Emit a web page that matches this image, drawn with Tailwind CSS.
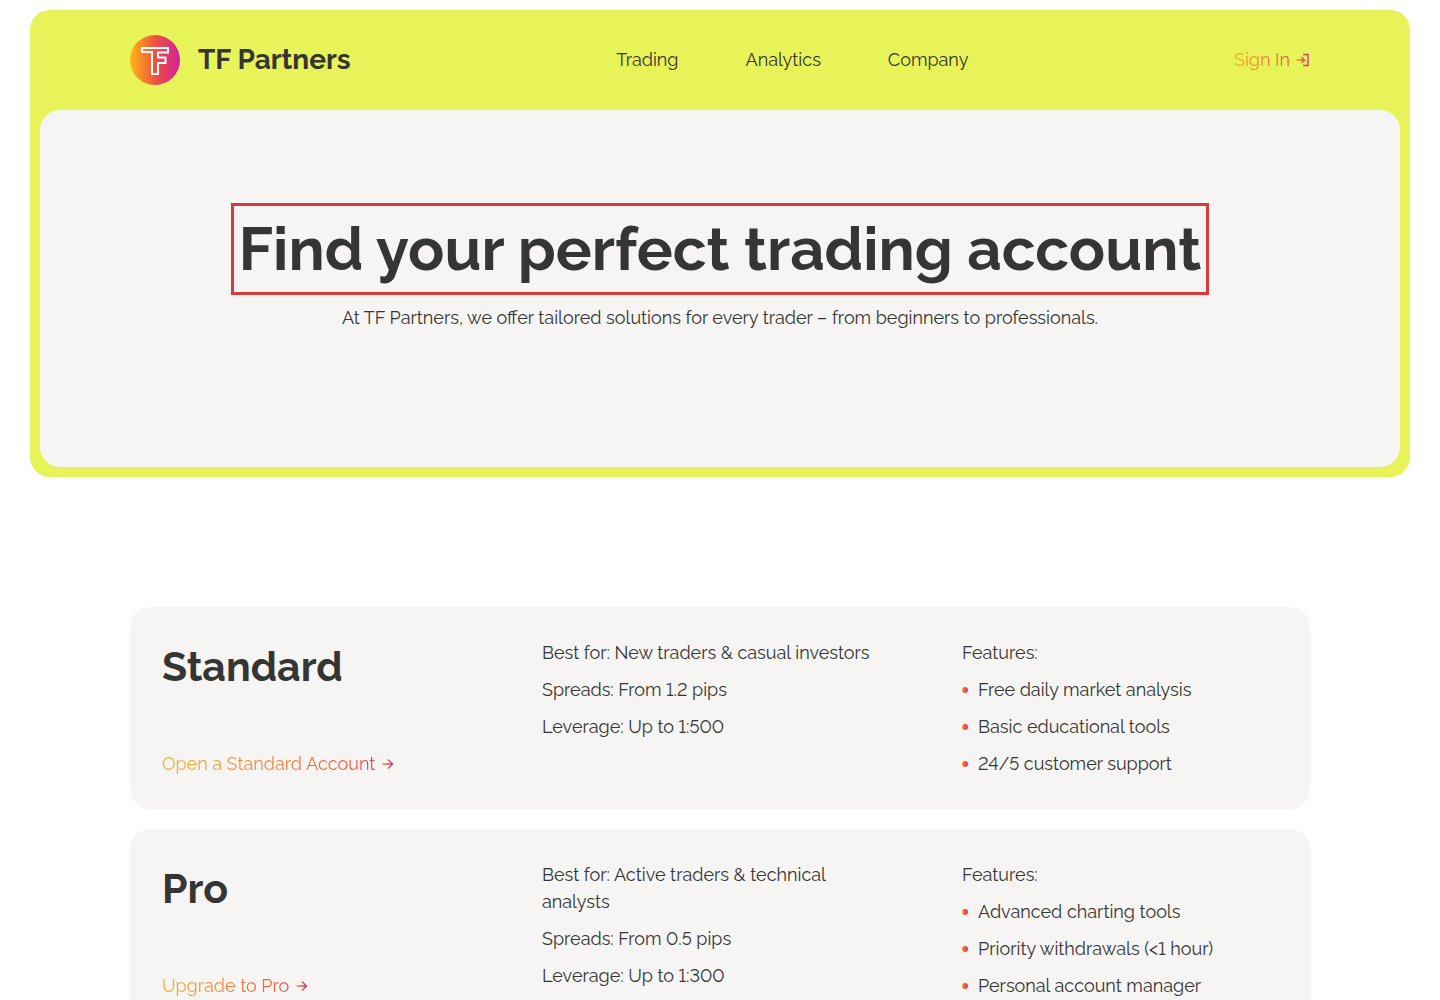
<!DOCTYPE html>
<html lang="en">

<head>
    <meta charset="UTF-8">
    <meta name="viewport" content="width=device-width, initial-scale=1.0">
    <script src="https://cdn.jsdelivr.net/npm/@tailwindcss/browser@4"></script>
    <title>TF Partners - Trading accounts</title>
</head>

<body class="bg-white font-['Raleway','Lato',sans-serif] text-lg leading-[27px] lining-nums text-[#353533]">
    <!-- shared gradient for icons -->
    <svg class="absolute size-0" aria-hidden="true">
        <defs>
            <linearGradient id="brand" gradientUnits="userSpaceOnUse" x1="0" x2="14" y1="0" y2="0">
                <stop offset="0" stop-color="#fba815" />
                <stop offset="0.5" stop-color="#ee4f45" />
                <stop offset="1" stop-color="#c81fa5" />
            </linearGradient>
        </defs>
    </svg>

    <div class="mx-[30px] mt-2.5 rounded-[20px] bg-[#e7f358] px-2.5 pb-2.5">
        <header class="flex h-[100px] items-center justify-between px-[90px] leading-7">
            <a href="#" class="flex items-center gap-[18px] text-[28px] leading-[30px] font-bold">
                <svg class="size-[50px]" viewBox="0 0 50 50" fill="none">
                    <defs>
                        <linearGradient id="logo" x1="0" x2="1" y1="0" y2="0">
                            <stop offset="0" stop-color="#fdb913" />
                            <stop offset="0.5" stop-color="#f0513f" />
                            <stop offset="1" stop-color="#d1219a" />
                        </linearGradient>
                    </defs>
                    <circle cx="25" cy="25" r="25" fill="url(#logo)" />
                    <path d="M12 13H38V17.500H28V22.500H35.500V28H28V39H22V17H12Z" stroke="#fff" stroke-width="2" />
                </svg>
                TF Partners
            </a>
            <nav class="flex gap-[67px]">
                <a href="#">Trading</a>
                <a href="#">Analytics</a>
                <a href="#">Company</a>
            </nav>
            <a href="#" class="flex items-center gap-1.5 bg-linear-to-r from-[#f9a41c] via-[#ee5a3c] via-70% to-[#d92f7c] bg-clip-text text-transparent">
                Sign In
                <svg class="size-3.5" viewBox="0 0 14 14" fill="none" stroke="url(#brand)" stroke-width="1.300">
                    <path d="M0.500 7H8.500L5.500 4M8.500 7L5.500 10" />
                    <path d="M7 1.500H12V12.500H7" />
                </svg>
            </a>
        </header>

        <section class="flex flex-col items-center rounded-[20px] bg-[#f6f5f3] pt-[93px] pb-[136px] text-center">
            <h1 class="border-3 border-[#d63a3e] px-[5px] text-[60px] leading-[86px] font-bold">Find your perfect trading account</h1>
            <p class="mt-[9px]">At TF Partners, we offer tailored solutions for every trader – from beginners to professionals.</p>
        </section>
    </div>

    <main class="mx-[130px] mt-[130px] flex flex-col gap-5 pb-20">
        <article class="grid grid-cols-[300fr_340fr_316fr] gap-x-20 rounded-[20px] bg-[#f6f5f3] p-8">
            <div class="flex flex-col items-start justify-between">
                <h2 class="text-[41px] leading-[56px] font-bold">Standard</h2>
                <a href="#" class="flex items-center gap-1.5 bg-linear-to-r from-[#fbb01a] via-[#ee5a3c] via-80% to-[#d92f7c] bg-clip-text text-transparent">
                    Open a Standard Account
                    <svg class="size-3.5" viewBox="0 0 14 14" fill="none" stroke="url(#brand)" stroke-width="1.300">
                        <path d="M1.500 7.001L11.500 7M7 2.500L11.500 7L7 11.500" />
                    </svg>
                </a>
            </div>
            <div class="flex flex-col gap-2.5">
                <p>Best for: New traders &amp; casual investors</p>
                <p>Spreads: From 1.2 pips</p>
                <p>Leverage: Up to 1:500</p>
            </div>
            <div>
                <p>Features:</p>
                <ul class="mt-2.5 flex flex-col gap-2.5">
                    <li class="flex items-center gap-2.5 before:size-1.5 before:rounded-full before:bg-linear-to-r before:from-[#fba01c] before:via-[#f0513f] before:to-[#dc3080]">Free daily market analysis</li>
                    <li class="flex items-center gap-2.5 before:size-1.5 before:rounded-full before:bg-linear-to-r before:from-[#fba01c] before:via-[#f0513f] before:to-[#dc3080]">Basic educational tools</li>
                    <li class="flex items-center gap-2.5 before:size-1.5 before:rounded-full before:bg-linear-to-r before:from-[#fba01c] before:via-[#f0513f] before:to-[#dc3080]">24/5 customer support</li>
                </ul>
            </div>
        </article>

        <article class="grid grid-cols-[300fr_340fr_316fr] gap-x-20 rounded-[20px] bg-[#f6f5f3] p-8">
            <div class="flex flex-col items-start justify-between">
                <h2 class="text-[41px] leading-[56px] font-bold">Pro</h2>
                <a href="#" class="flex items-center gap-1.5 bg-linear-to-r from-[#fbb01a] via-[#ee5a3c] via-80% to-[#d92f7c] bg-clip-text text-transparent">
                    Upgrade to Pro
                    <svg class="size-3.5" viewBox="0 0 14 14" fill="none" stroke="url(#brand)" stroke-width="1.300">
                        <path d="M1.500 7.001L11.500 7M7 2.500L11.500 7L7 11.500" />
                    </svg>
                </a>
            </div>
            <div class="flex flex-col gap-2.5">
                <p>Best for: Active traders &amp; technical analysts</p>
                <p>Spreads: From 0.5 pips</p>
                <p>Leverage: Up to 1:300</p>
            </div>
            <div>
                <p>Features:</p>
                <ul class="mt-2.5 flex flex-col gap-2.5">
                    <li class="flex items-center gap-2.5 before:size-1.5 before:rounded-full before:bg-linear-to-r before:from-[#fba01c] before:via-[#f0513f] before:to-[#dc3080]">Advanced charting tools</li>
                    <li class="flex items-center gap-2.5 before:size-1.5 before:rounded-full before:bg-linear-to-r before:from-[#fba01c] before:via-[#f0513f] before:to-[#dc3080]">Priority withdrawals (&lt;1 hour)</li>
                    <li class="flex items-center gap-2.5 before:size-1.5 before:rounded-full before:bg-linear-to-r before:from-[#fba01c] before:via-[#f0513f] before:to-[#dc3080]">Personal account manager</li>
                </ul>
            </div>
        </article>
    </main>
</body>

</html>
